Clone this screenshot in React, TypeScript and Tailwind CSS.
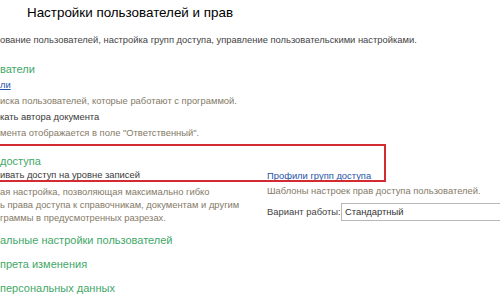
import React from "react";

const green = "text-[#3fa868]";
const note = "text-[#857a68]";
const dark = "text-[#3a3a3a]";
const link = "text-[#2454a8] underline";

export default function App() {
  return (
    <div className="relative w-[500px] h-[300px] overflow-hidden bg-white font-['Liberation_Sans',Arial,sans-serif] whitespace-nowrap">
      <div className="pl-[27px] pt-[5px] h-[24px] text-[13.4px] leading-[16px] text-black">
        Настройки пользователей и прав
      </div>
      <div className="h-[26px] pt-[10px] text-[9.4px] leading-[11px] text-[#444]">
        ование пользователей, настройка групп доступа, управление пользовательскими настройками.
      </div>

      <div className="mt-[12px] flex flex-col">
        <div className={`h-[16px] text-[11px] leading-[14px] ${green}`}>ватели</div>
        <div className={`h-[16px] text-[9.4px] leading-[14px] ${link}`}>ли</div>
        <div className={`h-[16px] text-[9.4px] leading-[14px] ${note}`}>
          иска пользователей, которые работают с программой.
        </div>
        <div className={`h-[16px] text-[9.4px] leading-[14px] ${dark}`}>кать автора документа</div>
        <div className={`h-[16px] text-[9.4px] leading-[14px] ${note}`}>
          мента отображается в поле "Ответственный".
        </div>
      </div>

      <div className="mt-[12px] flex">
        <div className="w-[267px] shrink-0 flex flex-col">
          <div className={`h-[14px] text-[11px] leading-[14px] ${green}`}>доступа</div>
          <div className={`h-[16px] text-[9.4px] leading-[14px] ${dark}`}>ивать доступ на уровне записей</div>
          <div className={`mt-[1px] text-[9.4px] leading-[13px] ${note}`}>
            <div>ая настройка, позволяющая максимально гибко</div>
            <div>ь права доступа к справочникам, документам и другим</div>
            <div>граммы в предусмотренных разрезах.</div>
          </div>
        </div>
        <div className="flex flex-col pt-[15px]">
          <div className={`h-[15px] text-[9.4px] leading-[14px] ${link}`}>Профили групп доступа</div>
          <div className={`h-[16px] text-[9.4px] leading-[14px] ${note}`}>
            Шаблоны настроек прав доступа пользователей.
          </div>
          <div className="mt-[3px] flex items-center">
            <span className="w-[74px] text-[9.4px] text-[#444]">Вариант работы:</span>
            <div className="h-[18px] w-[200px] border border-[#b8b8b8] px-[3px] text-[9.4px] leading-[16px] text-[#333]">
              Стандартный
            </div>
          </div>
        </div>
      </div>

      <div className={`mt-[9px] flex flex-col gap-[9px] text-[11px] leading-[15px] ${green}`}>
        <div>альные настройки пользователей</div>
        <div>прета изменения</div>
        <div>персональных данных</div>
      </div>

      <div className="absolute left-[-4px] top-[144px] w-[390px] h-[38px] border-2 border-[#d42a32] pointer-events-none" />
    </div>
  );
}
